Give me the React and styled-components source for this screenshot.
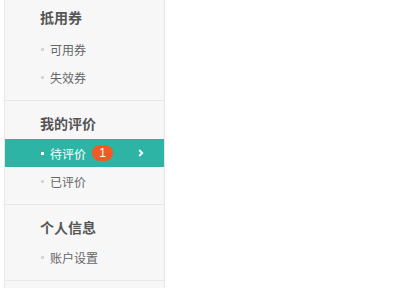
import React from 'react';
import styled, { createGlobalStyle } from 'styled-components';

const GlobalStyle = createGlobalStyle`
  body {
    margin: 0;
    background: #fff;
    font-family: "Liberation Sans", "Noto Sans CJK SC", sans-serif;
  }
`;

const Sidebar = styled.aside`
  width: 159px;
  min-height: 100vh;
  margin-left: 4px;
  background: #f7f7f8;
  border-left: 1px solid #e6e6e6;
  border-right: 1px solid #e6e6e6;
`;

const Section = styled.section`
  padding: ${p => (p.first ? '8px 0 9px' : '13px 0 9px')};
  border-bottom: 1px solid #e8e8e8;
`;

const Heading = styled.h3`
  margin: 0 0 ${p => (p.first ? '7px' : '5px')} 35px;
  height: 20px;
  line-height: 20px;
  font-size: 14px;
  font-weight: bold;
  color: #555;
`;

const List = styled.ul`
  list-style: none;
  margin: 0;
  padding: 0;
`;

const Item = styled.li`
  display: flex;
  align-items: center;
  height: 28px;
  padding-left: 36px;
  padding-right: 20px;
  font-size: 12px;
  color: ${p => (p.active ? '#fff' : '#666')};
  background: ${p => (p.active ? '#2db4a5' : 'transparent')};
  cursor: pointer;
`;

const Dot = styled.span`
  width: 3px;
  height: 3px;
  margin-right: 6px;
  background: ${p => (p.active ? '#fff' : '#d6d6d6')};
`;

const Badge = styled.span`
  display: inline-flex;
  align-items: center;
  justify-content: center;
  width: 21px;
  height: 16px;
  margin-left: 6px;
  border-radius: 8px;
  background: #f05a24;
  color: #fff;
  font-size: 12px;
  line-height: 16px;
`;

const Arrow = styled.svg`
  margin-left: auto;
`;

const sections = [
  { title: '抵用券', items: [{ label: '可用券' }, { label: '失效券' }] },
  { title: '我的评价', items: [{ label: '待评价', active: true, badge: 1 }, { label: '已评价' }] },
  { title: '个人信息', items: [{ label: '账户设置' }] },
];

export default function App() {
  return (
    <>
      <GlobalStyle />
      <Sidebar>
        {sections.map((s, i) => (
          <Section key={s.title} first={i === 0}>
            <Heading first={i === 0}>{s.title}</Heading>
            <List>
              {s.items.map(it => (
                <Item key={it.label} active={it.active}>
                  <Dot active={it.active} />
                  {it.label}
                  {it.badge && <Badge>{it.badge}</Badge>}
                  {it.active && (
                    <Arrow width="6" height="8" viewBox="0 0 6 8">
                      <path d="M1.2 1 L4.2 4 L1.2 7" fill="none" stroke="#fff" strokeWidth="1.8" />
                    </Arrow>
                  )}
                </Item>
              ))}
            </List>
          </Section>
        ))}
      </Sidebar>
    </>
  );
}
